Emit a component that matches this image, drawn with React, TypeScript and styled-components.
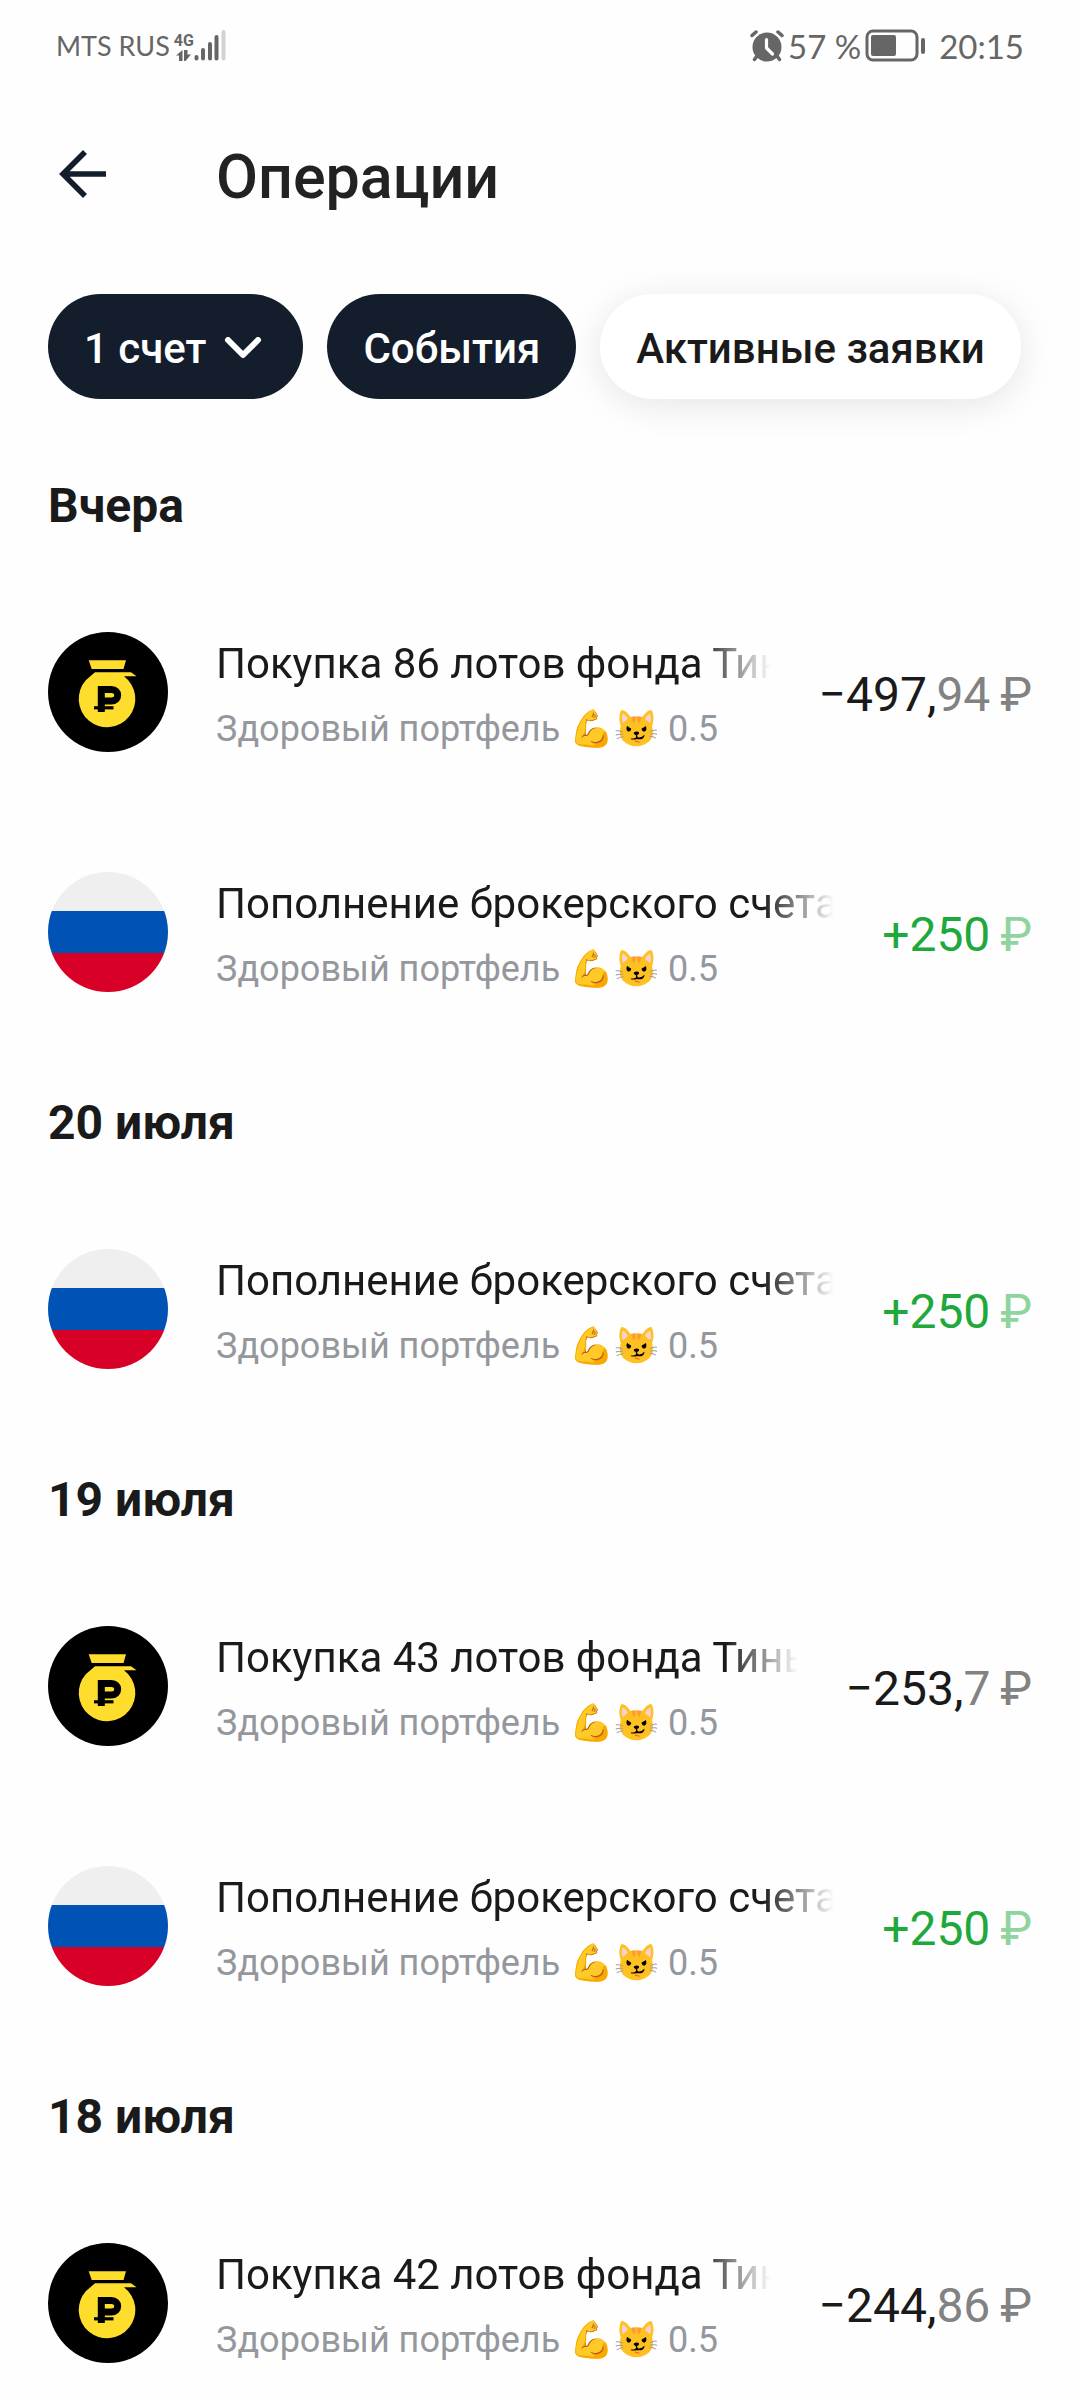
import React from "react";
import styled, { createGlobalStyle } from "styled-components";

const GlobalStyle = createGlobalStyle`
  *, *::before, *::after { box-sizing: border-box; }
  html, body, #root { height: 100%; margin: 0; }
  body {
    background: #fefefe;
    color: #1a1a1a;
    font-family: Roboto, "Noto Sans", sans-serif;
  }
  h1, h2, p, ul { margin: 0; padding: 0; }
  ul { list-style: none; }
  button { font-family: inherit; border: 0; cursor: pointer; }
`;

const Screen = styled.div`
  height: 100%;
  display: flex;
  flex-direction: column;
  overflow: hidden;
`;

const StatusBar = styled.div`
  flex: none;
  height: 84px;
  padding: 8px 56px 0;
  display: flex;
  align-items: center;
  justify-content: space-between;
  color: #666;
  font-family: Lato, sans-serif;
`;

const StatusGroup = styled.div`
  display: flex;
  align-items: center;
  gap: 4px;
`;

const Carrier = styled.span`
  font-size: 27px;
  line-height: 40px;
`;

const Reading = styled.span`
  font-size: 33px;
  line-height: 40px;
`;

const Clock = styled(Reading)`
  margin-left: 8px;
`;

const Network = styled.span`
  display: flex;
  align-items: flex-end;
`;

const NetworkKind = styled.span`
  display: flex;
  flex-direction: column;
  align-items: center;
  font: 700 16px/18px Roboto, sans-serif;
`;

const Header = styled.header`
  flex: none;
  height: 180px;
  padding: 0 48px;
  display: flex;
  align-items: center;
  gap: 96px;
`;

const BackButton = styled.button`
  width: 72px;
  height: 72px;
  padding: 0;
  background: none;
  color: #141d2c;
  display: grid;
  place-items: center;
`;

const Title = styled.h1`
  padding-top: 5px;
  font-size: 61px;
  line-height: 72px;
  font-weight: 500;
  color: #222;
`;

const Filters = styled.nav`
  flex: none;
  padding: 30px 48px 36px;
  display: flex;
  gap: 24px;
`;

const Chip = styled.button<{ $active?: boolean }>`
  height: 105px;
  padding: 4px 36px 0;
  border-radius: 53px;
  display: flex;
  align-items: center;
  gap: 18px;
  font-size: 42px;
  line-height: 48px;
  font-weight: 500;
  white-space: nowrap;
  color: ${(p) => (p.$active ? "#fff" : "#1a1a1a")};
  background: ${(p) => (p.$active ? "#141d2c" : "#fff")};
  box-shadow: ${(p) => (p.$active ? "none" : "0 6px 36px rgba(0, 0, 0, 0.1)")};
`;

const Feed = styled.main`
  flex: 1;
  min-height: 0;
  overflow-y: auto;
  scrollbar-width: none;
`;

const DayTitle = styled.h2`
  padding: 43px 48px 38px;
  font-size: 48px;
  line-height: 56px;
  font-weight: 700;
`;

const Row = styled.li`
  height: 240px;
  padding: 0 48px;
  display: flex;
  align-items: center;
  gap: 48px;
`;

const Avatar = styled.svg`
  flex: none;
  width: 120px;
  height: 120px;
  display: block;
`;

const Details = styled.div`
  flex: 1;
  min-width: 0;
  padding-top: 8px;
`;

const Operation = styled.p`
  font-size: 42px;
  line-height: 66px;
  white-space: nowrap;
  overflow: hidden;
  mask-image: linear-gradient(to left, transparent, #000 72px);
`;

const Account = styled.p`
  font-size: 36px;
  line-height: 64px;
  color: #94979c;
  white-space: nowrap;
`;

const Amount = styled.p<{ $income: boolean }>`
  flex: none;
  padding-top: 6px;
  font-size: 48px;
  line-height: 56px;
  white-space: nowrap;
  color: ${(p) => (p.$income ? "#1fa83c" : "#1a1a1a")};
`;

const Minor = styled.span<{ $income: boolean }>`
  color: ${(p) => (p.$income ? "#8fd49e" : "#828282")};
`;

const SignalIcon = () => (
  <svg width="32" height="32" viewBox="0 0 32 32" aria-hidden="true">
    <g stroke="#666" strokeWidth="4" strokeLinecap="round">
      <path d="M2.500 27v1.500M9 20v8.500M16 14v14.500M22.500 7v21.500" />
      <path stroke="#d2d2d2" d="M29.500 2v26.500" />
    </g>
  </svg>
);

const DataArrows = () => (
  <svg width="15" height="12" viewBox="0 0 15 12" aria-hidden="true">
    <path fill="#666" d="M6.500 0v11H3V5.500H0zM8 0h3.500v4.500H15L9.500 11H8z" />
  </svg>
);

const AlarmIcon = () => (
  <svg width="34" height="32" viewBox="0 0 34 32" aria-hidden="true">
    <g fill="none" stroke="#666" strokeLinecap="round">
      <path strokeWidth="3.500" d="M2 5.500 6 2M32 5.500 28 2M7 26l-2.500 3.500M27 26l2.500 3.500" />
    </g>
    <circle cx="17" cy="17" r="14.500" fill="#666" />
    <path fill="none" stroke="#fefefe" strokeWidth="3.200" strokeLinecap="round" strokeLinejoin="round" d="M16.500 9.500v8.500l6 6" />
  </svg>
);

const BatteryIcon = () => (
  <svg width="62" height="34" viewBox="0 0 62 34" aria-hidden="true">
    <rect x="2" y="2" width="50" height="29" rx="6" fill="none" stroke="#666" strokeWidth="3" />
    <rect x="6" y="6" width="25" height="21" rx="2" fill="#666" />
    <path stroke="#666" strokeWidth="4" strokeLinecap="round" d="M58 11v12" />
  </svg>
);

const BackIcon = () => (
  <svg width="72" height="72" viewBox="0 0 72 72" aria-hidden="true">
    <path fill="none" stroke="currentColor" strokeWidth="5.600" d="M57 36H15M36 14 14 36l22 22" transform="translate(1)" />
  </svg>
);

const ChevronIcon = () => (
  <svg width="43" height="24" viewBox="0 0 43 24" aria-hidden="true">
    <path fill="none" stroke="currentColor" strokeWidth="6" strokeLinecap="round" strokeLinejoin="round" d="M4 3l15 15L34 3" />
  </svg>
);

const FundAvatar = () => (
  <Avatar viewBox="0 0 120 120" aria-hidden="true">
    <circle cx="60" cy="60" r="60" fill="#000" />
    <g fill="#ffdd2d">
      <path d="M40.700 28.300H78L75.500 37H43.700z" />
      <path d="M47 40.300h36l5.500 4H76A28.300 28.300 0 1 1 38 48z" />
    </g>
    <path fill="none" stroke="#000" strokeWidth="7" d="M53.300 80V57.500h10c8.500 0 8.500 11.500 0 11.500h-10" />
    <path stroke="#000" strokeWidth="3.200" d="M46 75.800h19.500" />
  </Avatar>
);

const RubleAvatar = () => (
  <Avatar viewBox="0 0 120 120" aria-hidden="true">
    <clipPath id="disc">
      <circle cx="60" cy="60" r="60" />
    </clipPath>
    <g clipPath="url(#disc)">
      <path fill="#efefef" d="M0 0h120v39H0z" />
      <path fill="#0052b4" d="M0 39h120v42H0z" />
      <path fill="#d80027" d="M0 81h120v39H0z" />
    </g>
  </Avatar>
);

type Entry = { title: string; major: string; minor?: string; income: boolean };
type Day = { name: string; entries: Entry[] };

const deposit: Entry = {
  title: "Пополнение брокерского счета",
  major: "+250",
  income: true,
};

const purchase = (lots: number, major: string, minor: string): Entry => ({
  title: `Покупка ${lots} лотов фонда Тинькофф`,
  major,
  minor,
  income: false,
});

const days: Day[] = [
  { name: "Вчера", entries: [purchase(86, "\u2212497,", "94"), deposit] },
  { name: "20 июля", entries: [deposit] },
  { name: "19 июля", entries: [purchase(43, "\u2212253,", "7"), deposit] },
  { name: "18 июля", entries: [purchase(42, "\u2212244,", "86")] },
];

const EntryRow = ({ title, major, minor = "", income }: Entry) => (
  <Row>
    {income ? <RubleAvatar /> : <FundAvatar />}
    <Details>
      <Operation>{title}</Operation>
      <Account>Здоровый портфель 💪😼 0.5</Account>
    </Details>
    <Amount $income={income}>
      {major}
      <Minor $income={income}>{minor + "\u2009₽"}</Minor>
    </Amount>
  </Row>
);

export default function App() {
  return (
    <>
      <GlobalStyle />
      <Screen>
        <StatusBar>
          <StatusGroup>
            <Carrier>MTS RUS</Carrier>
            <Network>
              <NetworkKind>
                4G
                <DataArrows />
              </NetworkKind>
              <SignalIcon />
            </Network>
          </StatusGroup>
          <StatusGroup>
            <AlarmIcon />
            <Reading>57 %</Reading>
            <BatteryIcon />
            <Clock>20:15</Clock>
          </StatusGroup>
        </StatusBar>
        <Header>
          <BackButton type="button" aria-label="Назад">
            <BackIcon />
          </BackButton>
          <Title>Операции</Title>
        </Header>
        <Filters aria-label="Фильтры">
          <Chip type="button" $active aria-haspopup="listbox">
            1 счет
            <ChevronIcon />
          </Chip>
          <Chip type="button" $active aria-pressed="true">
            События
          </Chip>
          <Chip type="button" aria-pressed="false">
            Активные заявки
          </Chip>
        </Filters>
        <Feed>
          {days.map((day) => (
            <section key={day.name}>
              <DayTitle>{day.name}</DayTitle>
              <ul>
                {day.entries.map((entry) => (
                  <EntryRow key={entry.title} {...entry} />
                ))}
              </ul>
            </section>
          ))}
        </Feed>
      </Screen>
    </>
  );
}
